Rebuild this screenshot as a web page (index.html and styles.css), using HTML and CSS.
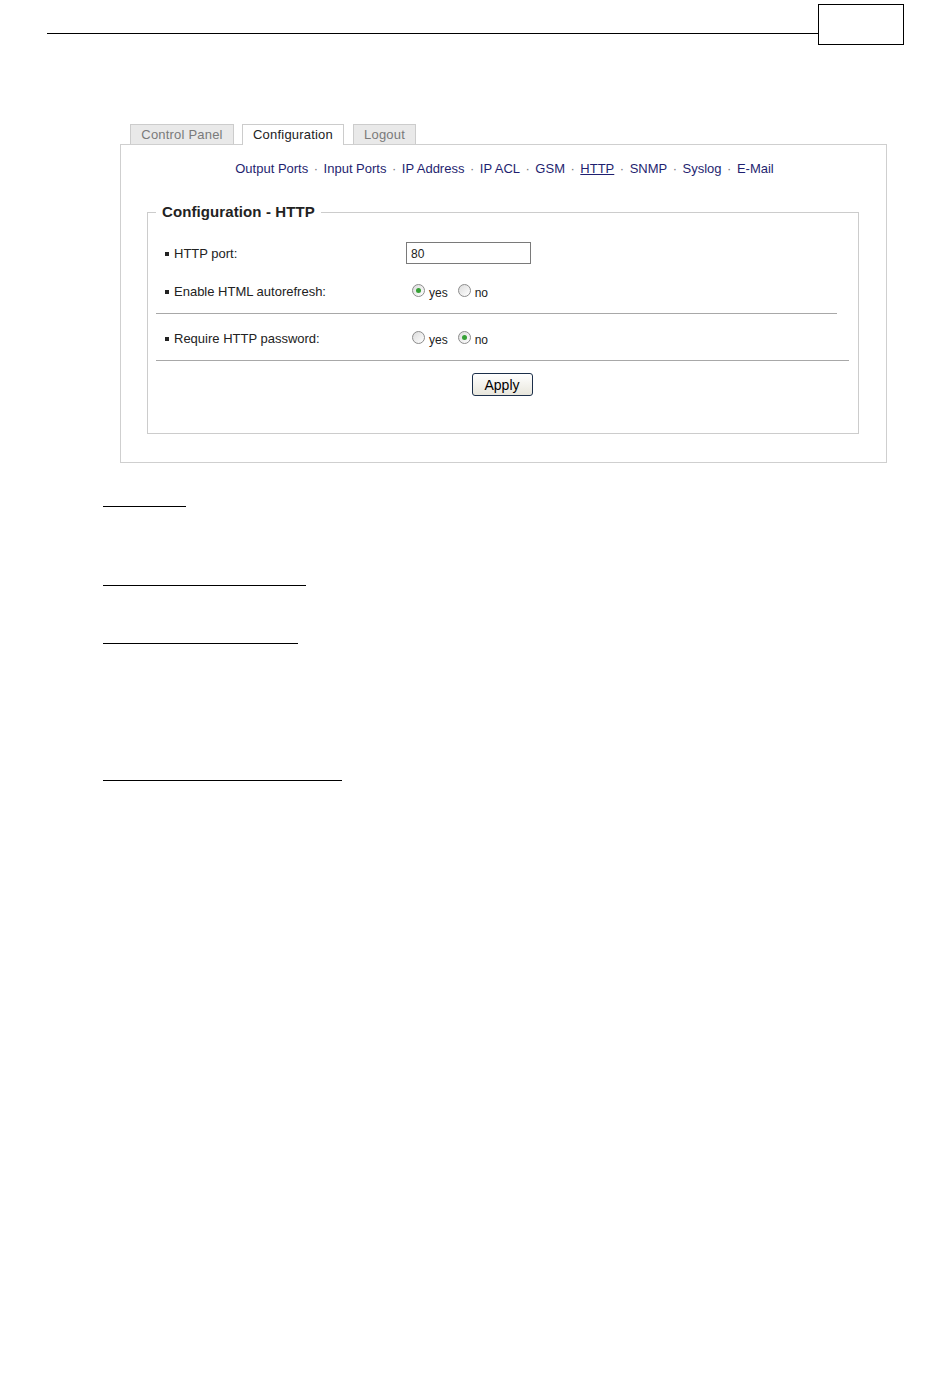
FILE: index.html
```html
<!DOCTYPE html>
<html lang="en">
<head>
    <meta charset="UTF-8">
    <meta name="viewport" content="width=device-width, initial-scale=1.0">
    <title>Configuration - HTTP</title>
    <link rel="stylesheet" href="styles.css">
</head>
<body>
    <div class="page-head">
        <div class="head-rule"></div>
        <div class="page-number"></div>
    </div>

    <div class="screen">
        <div class="tabs">
            <a class="tab tab-control" href="#">Control Panel</a>
            <a class="tab tab-config active" href="#">Configuration</a>
            <a class="tab tab-logout" href="#">Logout</a>
        </div>
        <div class="panel">
            <div class="sub-nav">
                <a href="#">Output Ports</a><span class="sep">&middot;</span><a href="#">Input Ports</a><span class="sep">&middot;</span><a href="#">IP Address</a><span class="sep">&middot;</span><a href="#">IP ACL</a><span class="sep">&middot;</span><a href="#">GSM</a><span class="sep">&middot;</span><a class="current" href="#">HTTP</a><span class="sep">&middot;</span><a href="#">SNMP</a><span class="sep">&middot;</span><a href="#">Syslog</a><span class="sep">&middot;</span><a href="#">E-Mail</a>
            </div>

            <form class="config-form" action="#" method="POST">
                <fieldset>
                    <legend>Configuration - HTTP</legend>

                    <div class="row row-first">
                        <label class="row-label" for="http_port"><span class="bullet"></span>HTTP port:</label>
                        <input type="text" id="http_port" name="http_port" value="80">
                    </div>
                    <div class="row row-second">
                        <span class="row-label"><span class="bullet"></span>Enable HTML autorefresh:</span>
                        <label class="choice"><input type="radio" name="autorefresh" value="1" checked>yes</label>
                        <label class="choice"><input type="radio" name="autorefresh" value="0">no</label>
                    </div>
                    <hr class="rule rule-short">
                    <div class="row row-third">
                        <span class="row-label"><span class="bullet"></span>Require HTTP password:</span>
                        <label class="choice"><input type="radio" name="password" value="1">yes</label>
                        <label class="choice"><input type="radio" name="password" value="0" checked>no</label>
                    </div>
                    <hr class="rule rule-long">
                    <div class="actions">
                        <input type="submit" value="Apply">
                    </div>
                </fieldset>
            </form>
        </div>
    </div>

    <div class="refs">
        <a class="ref-link ref-1" href="#"></a>
        <a class="ref-link ref-2" href="#"></a>
        <a class="ref-link ref-3" href="#"></a>
        <a class="ref-link ref-4" href="#"></a>
    </div>
</body>
</html>
```

FILE: styles.css
```css
body {
    margin: 0;
    font-family: "Liberation Sans", Arial, sans-serif;
    font-size: 13px;
    color: #222;
    background-color: #ffffff;
}
.page-head {
    display: flex;
    align-items: flex-start;
    width: 904px;
    padding: 4px 0 0 47px;
    box-sizing: border-box;
}
.head-rule {
    flex: 1;
    height: 29px;
    border-bottom: 1px solid #000;
}
.page-number {
    width: 86px;
    height: 41px;
    border: 1px solid #000;
    box-sizing: border-box;
}
.screen {
    width: 767px;
    margin: 79px 0 0 120px;
}
.tabs {
    display: flex;
    padding-left: 10px;
    height: 20px;
}
.tab {
    display: block;
    height: 20px;
    line-height: 20px;
    box-sizing: border-box;
    border: 1px solid #cccccc;
    border-bottom: none;
    background-color: #e9e9e9;
    color: #7a7a7a;
    text-align: center;
    text-decoration: none;
    letter-spacing: 0.2px;
}
.tab-control {
    width: 104px;
    margin-right: 8px;
}
.tab-config {
    width: 102px;
    margin-right: 9px;
}
.tab-logout {
    width: 63px;
}
.tab.active {
    position: relative;
    height: 21px;
    background-color: #ffffff;
    color: #222;
}
.panel {
    height: 319px;
    box-sizing: border-box;
    border: 1px solid #cfcfcf;
}
.sub-nav {
    padding-top: 16px;
    padding-left: 2px;
    line-height: 16px;
    text-align: center;
}
.sub-nav a {
    color: #1f1f70;
    text-decoration: none;
}
.sub-nav a.current {
    text-decoration: underline;
}
.sep {
    color: #777;
    padding: 0 5.5px;
}
.config-form {
    margin: 26px 27px 0 26px;
}
fieldset {
    margin: 0;
    padding: 0 8px 37px 8px;
    border: 1px solid #cccccc;
}
legend {
    padding: 0 6px;
    font-size: 15px;
    line-height: 18px;
    font-weight: bold;
    color: #222;
    letter-spacing: 0.1px;
}
.row {
    display: flex;
    align-items: center;
    height: 22px;
    padding-left: 9px;
}
.row-first {
    margin-top: 21px;
}
.row-second {
    margin-top: 16px;
}
.row-third {
    margin-top: 13px;
}
.row-label {
    display: flex;
    align-items: center;
    width: 241px;
    flex-shrink: 0;
}
.bullet {
    display: inline-block;
    width: 4px;
    height: 4px;
    margin: 2px 5px 0 0;
    background-color: #222;
}
input[type="text"] {
    width: 125px;
    height: 22px;
    box-sizing: border-box;
    margin: 0;
    padding: 1px 4px 0;
    border: 1px solid #7a7a7a;
    font-family: "Liberation Sans", Arial, sans-serif;
    font-size: 12px;
    color: #222;
}
.choice {
    display: flex;
    align-items: center;
    margin-left: 6px;
    margin-right: 4px;
    padding-top: 3px;
    font-size: 12px;
}
.choice input[type="radio"] {
    appearance: none;
    -webkit-appearance: none;
    width: 13px;
    height: 13px;
    box-sizing: border-box;
    margin: -5px 4px 0 0;
    border: 1px solid #8c8c8c;
    border-radius: 50%;
    background: linear-gradient(135deg, #dcdcdc, #ffffff);
    display: inline-flex;
    align-items: center;
    justify-content: center;
}
.choice input[type="radio"]:checked::after {
    content: "";
    width: 5px;
    height: 5px;
    border-radius: 50%;
    background-color: #35a035;
}
.rule {
    height: 0;
    margin: 11px 0 0 0;
    border: none;
    border-top: 1px solid #a8a8a8;
}
.rule-short {
    width: 681px;
}
.rule-long {
    width: 693px;
}
.actions {
    margin-top: 12px;
    text-align: center;
}
input[type="submit"] {
    width: 61px;
    height: 23px;
    margin: 0 0 0 -2px;
    padding: 0;
    border: 1px solid #1c2f4a;
    border-radius: 3px;
    background: linear-gradient(#ffffff, #e8e6dc);
    font-family: "Liberation Sans", Arial, sans-serif;
    font-size: 14px;
    color: #000;
    cursor: pointer;
}
.refs {
    padding-left: 103px;
}
.ref-link {
    display: block;
    height: 0;
    border-bottom: 1px solid #000;
}
.ref-1 {
    width: 83px;
    margin-top: 43px;
}
.ref-2 {
    width: 203px;
    margin-top: 78px;
}
.ref-3 {
    width: 195px;
    margin-top: 57px;
}
.ref-4 {
    width: 239px;
    margin-top: 136px;
}
```
